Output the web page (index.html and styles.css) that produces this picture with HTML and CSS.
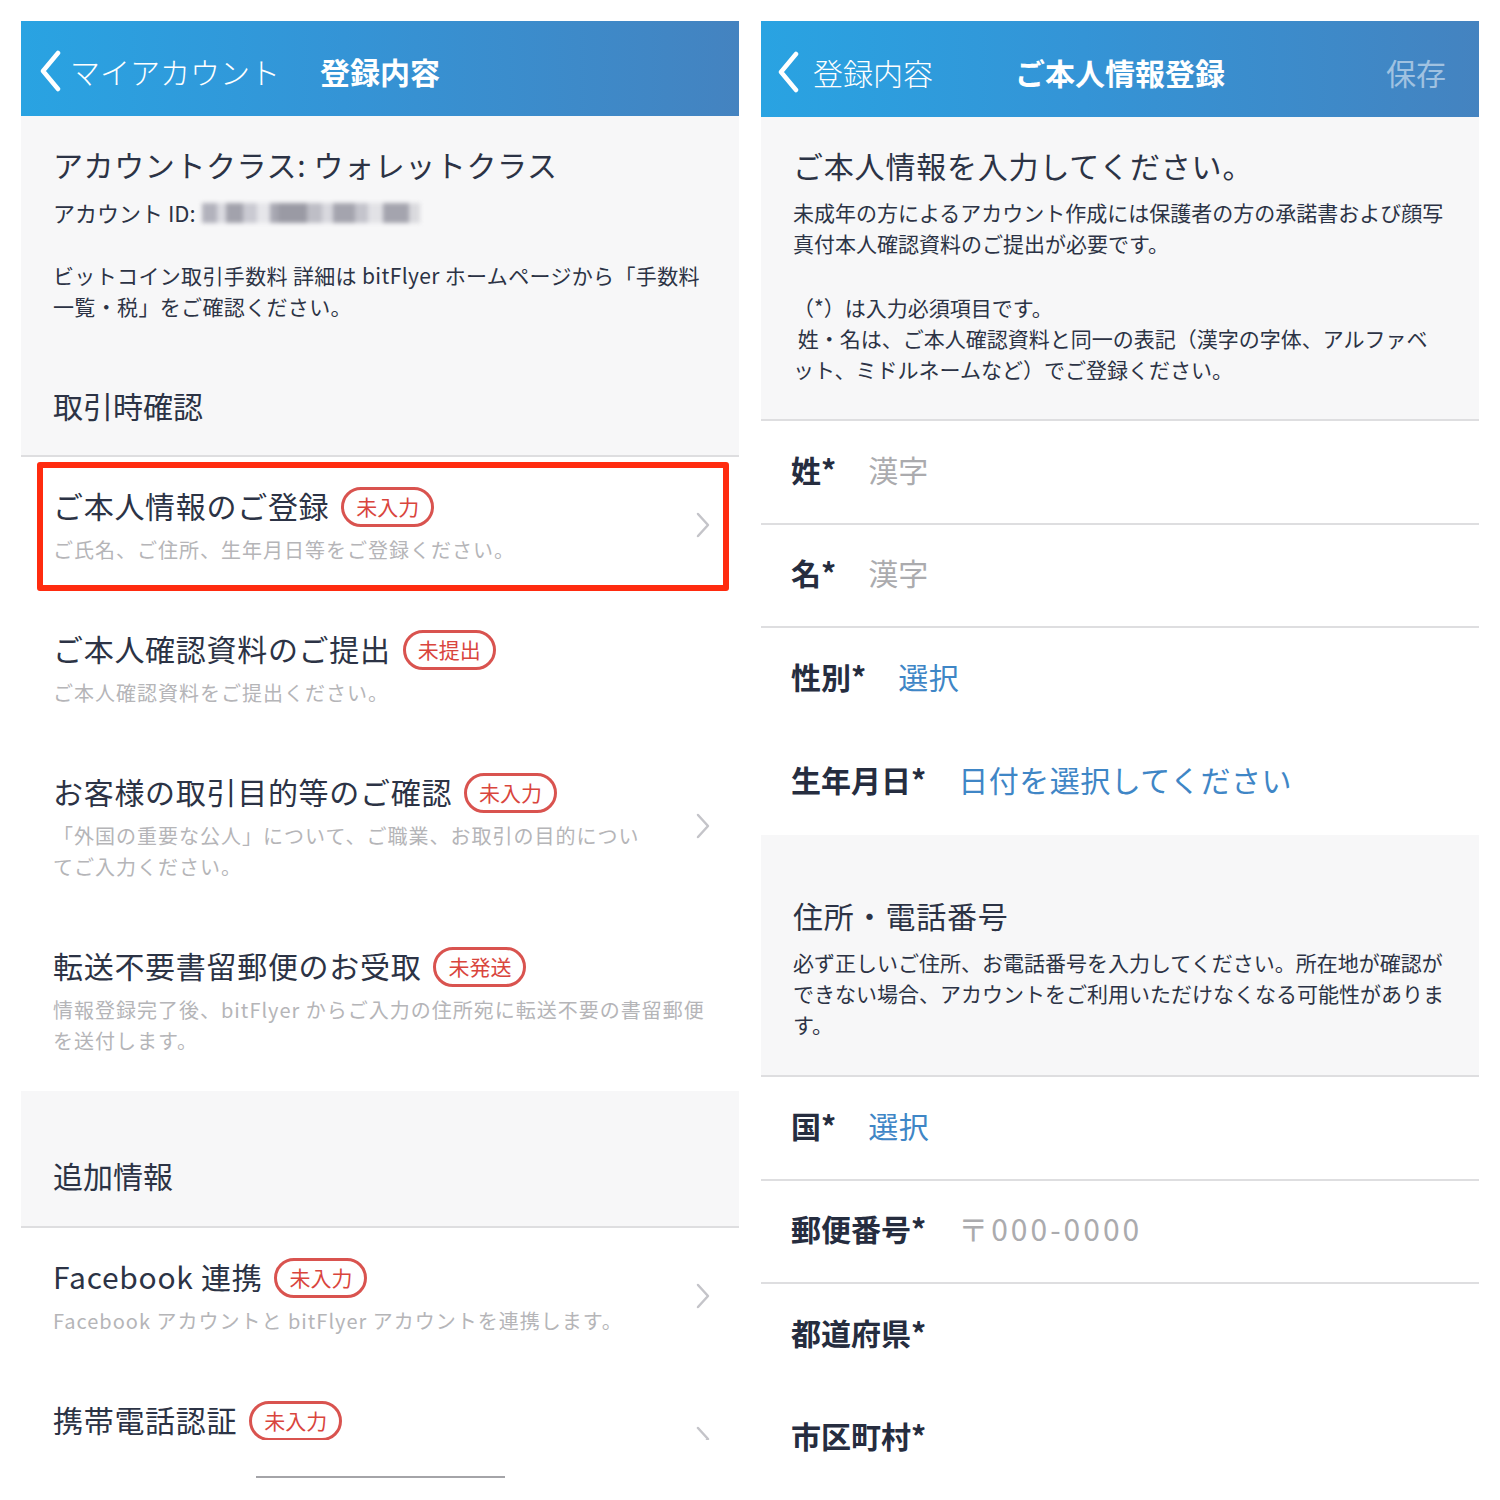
FILE: index.html
```html
<!DOCTYPE html>
<html lang="ja">
<head>
<meta charset="utf-8">
<title>登録内容</title>
<link rel="stylesheet" href="styles.css">
</head>
<body>
<div class="page">
  <section class="panel">
    <header class="nav">
      <div class="nav-back">
        <svg class="back-chev" width="24" height="42" viewBox="0 0 24 42"><path d="M20 3 L5 21 L20 39" fill="none" stroke="#fff" stroke-width="4.5" stroke-linecap="round" stroke-linejoin="round"/></svg>
        <span>マイアカウント</span>
      </div>
      <div class="nav-title">登録内容</div>
      <div class="nav-action"></div>
    </header>
    <div class="viewport">
      <div class="info">
        <div class="info-title">アカウントクラス: ウォレットクラス</div>
        <div class="info-id">アカウント ID: <span class="blur"></span></div>
        <p class="info-fee">ビットコイン取引手数料 詳細は bitFlyer ホームページから「手数料<br>一覧・税」をご確認ください。</p>
        <div class="info-section">取引時確認</div>
      </div>
      <ul class="list">
        <li class="item">
          <div class="item-body">
            <div class="item-title">ご本人情報のご登録<span class="badge">未入力</span></div>
            <div class="item-sub">ご氏名、ご住所、生年月日等をご登録ください。</div>
          </div>
          <svg class="chev" width="14" height="26" viewBox="0 0 14 26"><path d="M2 2 L12 13 L2 24" fill="none" stroke="#c4c4c9" stroke-width="2.5" stroke-linecap="round" stroke-linejoin="round"/></svg>
          <div class="mark"></div>
        </li>
        <li class="item">
          <div class="item-body">
            <div class="item-title">ご本人確認資料のご提出<span class="badge">未提出</span></div>
            <div class="item-sub">ご本人確認資料をご提出ください。</div>
          </div>
        </li>
        <li class="item">
          <div class="item-body">
            <div class="item-title">お客様の取引目的等のご確認<span class="badge">未入力</span></div>
            <div class="item-sub">「外国の重要な公人」について、ご職業、お取引の目的につい<br>てご入力ください。</div>
          </div>
          <svg class="chev" width="14" height="26" viewBox="0 0 14 26"><path d="M2 2 L12 13 L2 24" fill="none" stroke="#c4c4c9" stroke-width="2.5" stroke-linecap="round" stroke-linejoin="round"/></svg>
        </li>
        <li class="item">
          <div class="item-body">
            <div class="item-title">転送不要書留郵便のお受取<span class="badge">未発送</span></div>
            <div class="item-sub">情報登録完了後、bitFlyer からご入力の住所宛に転送不要の書留郵便<br>を送付します。</div>
          </div>
        </li>
      </ul>
      <div class="section-gray">追加情報</div>
      <ul class="list">
        <li class="item">
          <div class="item-body">
            <div class="item-title">Facebook 連携<span class="badge">未入力</span></div>
            <div class="item-sub">Facebook アカウントと bitFlyer アカウントを連携します。</div>
          </div>
          <svg class="chev" width="14" height="26" viewBox="0 0 14 26"><path d="M2 2 L12 13 L2 24" fill="none" stroke="#c4c4c9" stroke-width="2.5" stroke-linecap="round" stroke-linejoin="round"/></svg>
        </li>
        <li class="item">
          <div class="item-body">
            <div class="item-title">携帯電話認証<span class="badge">未入力</span></div>
            <div class="item-sub item-sub-empty"></div>
          </div>
          <svg class="chev" width="14" height="26" viewBox="0 0 14 26"><path d="M2 2 L12 13 L2 24" fill="none" stroke="#c4c4c9" stroke-width="2.5" stroke-linecap="round" stroke-linejoin="round"/></svg>
        </li>
      </ul>
    </div>
    <div class="home-area"><div class="home-bar"></div></div>
  </section>

  <section class="panel">
    <header class="nav nav-tall">
      <div class="nav-back nav-back-wide">
        <svg class="back-chev" width="24" height="42" viewBox="0 0 24 42"><path d="M20 3 L5 21 L20 39" fill="none" stroke="#fff" stroke-width="4.5" stroke-linecap="round" stroke-linejoin="round"/></svg>
        <span>登録内容</span>
      </div>
      <div class="nav-title">ご本人情報登録</div>
      <div class="nav-action">保存</div>
    </header>
    <div class="intro">
      <div class="intro-title">ご本人情報を入力してください。</div>
      <p class="intro-text">未成年の方によるアカウント作成には保護者の方の承諾書および顔写<br>真付本人確認資料のご提出が必要です。</p>
      <p class="intro-text intro-note">（*）は入力必須項目です。<br>&nbsp;姓・名は、ご本人確認資料と同一の表記（漢字の字体、アルファベ<br>ット、ミドルネームなど）でご登録ください。</p>
    </div>
    <div class="row"><span class="label">姓*</span><span class="value placeholder">漢字</span></div>
    <div class="row"><span class="label">名*</span><span class="value placeholder">漢字</span></div>
    <div class="row noline"><span class="label">性別*</span><span class="value select">選択</span></div>
    <div class="row noline"><span class="label">生年月日*</span><span class="value select">日付を選択してください</span></div>
    <div class="intro intro-address">
      <div class="intro-title">住所・電話番号</div>
      <p class="intro-text">必ず正しいご住所、お電話番号を入力してください。所在地が確認が<br>できない場合、アカウントをご利用いただけなくなる可能性がありま<br>す。</p>
    </div>
    <div class="row"><span class="label">国*</span><span class="value select">選択</span></div>
    <div class="row"><span class="label">郵便番号*</span><span class="value placeholder postal">〒000-0000</span></div>
    <div class="row noline"><span class="label">都道府県*</span></div>
    <div class="row noline"><span class="label">市区町村*</span></div>
  </section>
</div>
</body>
</html>
```

FILE: styles.css
```css
html, body {
  margin: 0;
  padding: 0;
  background: #ffffff;
}

body {
  font-family: "Noto Sans CJK JP", "Noto Sans", sans-serif;
  color: #2c3345;
}

.page {
  display: flex;
  gap: 22px;
  padding: 21px 21px 0;
  height: 1479px;
  overflow: hidden;
}

.panel {
  width: 718px;
  display: flex;
  flex-direction: column;
  flex: none;
}

/* navigation bar */
.nav {
  height: 95px;
  box-sizing: border-box;
  padding-top: 5px;
  background: linear-gradient(90deg, #29a3e2 0%, #3494d6 45%, #4483c0 100%);
  display: grid;
  grid-template-columns: 1fr auto 1fr;
  align-items: center;
  color: #ffffff;
  flex: none;
}

.nav-tall {
  height: 96px;
}

.nav-back {
  display: flex;
  align-items: center;
  gap: 8px;
  padding-left: 17px;
  font-size: 30px;
  line-height: 42px;
  font-weight: 300;
  white-space: nowrap;
}

.nav-back-wide {
  gap: 13px;
  padding-left: 15px;
}

.back-chev {
  display: block;
  flex: none;
}

.nav-title {
  font-size: 30px;
  line-height: 42px;
  font-weight: 700;
  white-space: nowrap;
}

.nav-action {
  justify-self: end;
  padding-right: 33px;
  font-size: 30px;
  line-height: 42px;
  color: rgba(255, 255, 255, 0.5);
}

/* left: scroll area */
.viewport {
  height: 1324px;
  overflow: hidden;
  flex: none;
}

.info {
  background: #f7f7f8;
  padding: 27px 32px 29px;
  border-bottom: 2px solid #dedee0;
}

.info-title {
  font-size: 30px;
  line-height: 42px;
  letter-spacing: 0.6px;
  color: #2c3345;
}

.info-id {
  margin-top: 12px;
  font-size: 22px;
  line-height: 31px;
  color: #2c3345;
  display: flex;
  align-items: center;
  gap: 6px;
}

.blur {
  display: inline-block;
  width: 218px;
  height: 20px;
  filter: blur(2px);
  background: linear-gradient(90deg,
    #b2b2bc 0 7%, #dadae0 7% 11%, #a2a2ac 11% 19%, #cacad2 19% 25%,
    #e6e6ea 25% 31%, #a8a8b2 31% 35%, #9a9aa4 35% 48%, #bebec6 48% 55%,
    #d8d8de 55% 60%, #a4a4ae 60% 70%, #c4c4cc 70% 76%, #e2e2e6 76% 83%,
    #a4a4ae 83% 95%, #dadade 95% 100%);
}

.info-fee {
  margin: 32px 0 0;
  font-size: 21px;
  line-height: 31px;
  letter-spacing: 0.35px;
  color: #2c3345;
  white-space: nowrap;
}

.info-section {
  margin-top: 62px;
  font-size: 30px;
  line-height: 42px;
  color: #2c3345;
}

.list {
  list-style: none;
  margin: 0;
  padding: 0;
  background: #ffffff;
}

.item {
  position: relative;
  display: flex;
  align-items: center;
  padding: 27px 29px 35px 32px;
}

.item-body {
  flex: 1;
  min-width: 0;
}

.item-title {
  display: flex;
  align-items: center;
  font-size: 30px;
  line-height: 42px;
  letter-spacing: 0.7px;
  color: #2c3345;
  white-space: nowrap;
}

.badge {
  margin-left: 12px;
  height: 40px;
  box-sizing: border-box;
  padding: 0 12px;
  border: 3px solid #d9534f;
  border-radius: 20px;
  font-size: 21px;
  line-height: 33px;
  letter-spacing: 0;
  color: #d9453d;
  position: relative;
  top: 2px;
}

.item-sub {
  margin-top: 8px;
  font-size: 20px;
  line-height: 31px;
  letter-spacing: 1px;
  color: #b5b5b8;
  white-space: nowrap;
}

.item-sub-empty {
  height: 31px;
}

.chev {
  flex: none;
  display: block;
}

.mark {
  position: absolute;
  left: 16px;
  top: 5px;
  right: 10px;
  bottom: 9px;
  border: 6px solid #ff2b0f;
  border-radius: 3px;
  pointer-events: none;
}

.section-gray {
  background: #f7f7f8;
  padding: 63px 32px 30px;
  font-size: 30px;
  line-height: 42px;
  color: #2c3345;
  border-bottom: 2px solid #dedee0;
}

.home-area {
  height: 60px;
  flex: none;
  padding-top: 36px;
  box-sizing: border-box;
}

.home-bar {
  width: 249px;
  height: 2px;
  margin: 0 auto;
  background: #a4a4a8;
}

/* right panel */
.intro {
  background: #f7f7f8;
  padding: 27px 20px 34px 32px;
  border-bottom: 2px solid #dedee0;
}

.intro-title {
  font-size: 30px;
  line-height: 42px;
  letter-spacing: 0.8px;
  color: #2c3345;
}

.intro-text {
  margin: 11px 0 0;
  font-size: 21px;
  line-height: 31px;
  color: #2c3345;
  white-space: nowrap;
}

.intro-note {
  margin-top: 33px;
}

.intro-address {
  padding-top: 59px;
  padding-bottom: 35px;
}

.row {
  display: flex;
  align-items: center;
  height: 101.5px;
  box-sizing: content-box;
  padding-left: 30px;
  border-bottom: 2px solid #dedee0;
  flex: none;
}

.row > span {
  position: relative;
  top: -3px;
}

.row.noline {
  border-bottom-color: transparent;
}

.label {
  font-size: 30px;
  line-height: 42px;
  font-weight: 700;
  color: #262d3f;
  margin-right: 32px;
  white-space: nowrap;
}

.value {
  font-size: 30px;
  line-height: 42px;
  white-space: nowrap;
}

.placeholder {
  color: #ababae;
}

.postal {
  letter-spacing: 3px;
}

.select {
  color: #3f86c6;
  letter-spacing: 0.5px;
}
```
